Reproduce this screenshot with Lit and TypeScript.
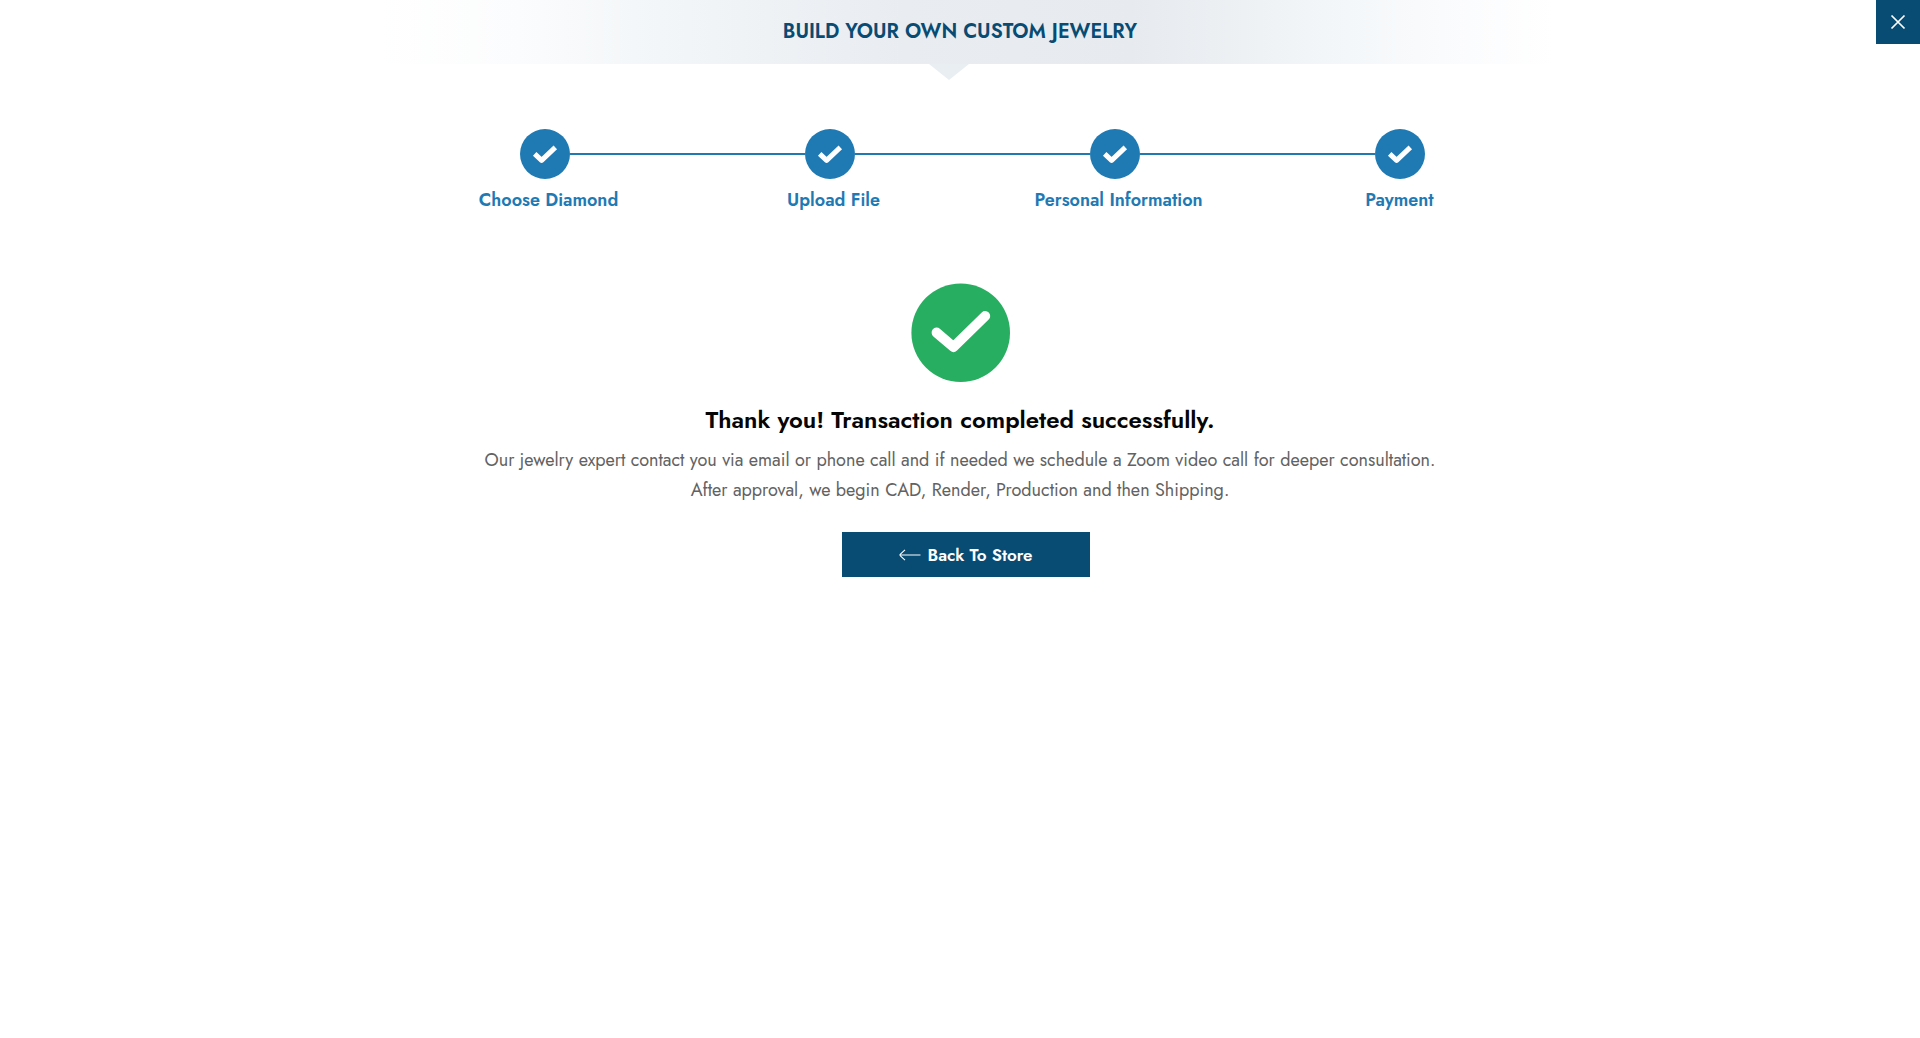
import { LitElement, html, css } from "lit";
import { customElement, property } from "lit/decorators.js";

const STEPS = ["Choose Diamond", "Upload File", "Personal Information", "Payment"];

@customElement("progress-steps")
export class ProgressSteps extends LitElement {
  @property({ type: Array }) steps: string[] = [];

  static styles = css`
    :host { display: block; }
    .steps {
      display: grid;
      grid-auto-flow: column;
      grid-auto-columns: 1fr;
      margin: 0;
      padding: 0;
      list-style: none;
    }
    .step {
      display: flex;
      flex-direction: column;
      align-items: center;
      gap: 6px;
    }
    .marker {
      display: flex;
      align-items: center;
      align-self: stretch;
    }
    .line { flex: 1; height: 2px; background: #1f7ab4; }
    .step:first-child .line:first-child,
    .step:last-child .line:last-child { visibility: hidden; }
    .dot { display: block; width: 50px; height: 50px; }
    .label {
      padding-left: 8px;
      color: #1f7ab4;
      font-size: 18px;
      font-weight: 600;
      line-height: 30px;
      white-space: nowrap;
    }
    .step:last-child .label { padding-left: 0; }
  `;

  render() {
    return html`
      <ol class="steps">
        ${this.steps.map(
          (label) => html`
            <li class="step">
              <div class="marker">
                <span class="line"></span>
                <svg class="dot" viewBox="0 0 50 50" aria-hidden="true">
                  <circle cx="25" cy="25" r="25" fill="#1f7ab4" />
                  <path
                    d="M14.7 24.9 21.6 31.4 35.3 18.4"
                    fill="none"
                    stroke="#fff"
                    stroke-width="5"
                    stroke-linejoin="round"
                  />
                </svg>
                <span class="line"></span>
              </div>
              <span class="label">${label}</span>
            </li>
          `
        )}
      </ol>
    `;
  }
}

@customElement("app-root")
export class AppRoot extends LitElement {
  static styles = css`
    :host {
      display: block;
      min-height: 100vh;
      background: #fff;
      font-family: Jost, Lato, sans-serif;
    }
    .header {
      position: relative;
      display: flex;
      justify-content: center;
      align-items: center;
      height: 64px;
      background: linear-gradient(
        90deg,
        #fff 20%,
        #fbfcfd 27%,
        #f4f7f9 33%,
        #eef2f5 40%,
        #e9edf2 47%,
        #e7ebf0 59%,
        #ecf0f3 64%,
        #f2f6f8 69%,
        #fafbfd 75%,
        #fff 81%
      );
    }
    .title {
      margin: 0;
      color: #084b73;
      font-size: 20px;
      font-weight: 600;
      line-height: 32px;
      text-transform: uppercase;
    }
    .notch {
      position: absolute;
      top: 100%;
      left: calc(50% - 31px);
      width: 40px;
      height: 16px;
      background: #e9eef2;
      clip-path: polygon(0 0, 100% 0, 50% 100%);
    }
    .close {
      position: absolute;
      top: 0;
      right: 0;
      display: grid;
      place-items: center;
      width: 44px;
      height: 44px;
      padding: 0;
      border: 0;
      background: #084b73;
      cursor: pointer;
    }
    .close-icon { display: block; width: 16px; height: 16px; }
    .content {
      box-sizing: border-box;
      max-width: 1164px;
      margin: 0 auto;
      padding-top: 65px;
    }
    .progress { padding-left: 24px; }
    .result {
      display: flex;
      flex-direction: column;
      align-items: center;
      margin-top: 68px;
      text-align: center;
    }
    .success { display: block; width: 100px; height: 100px; }
    .heading {
      margin: 19px 0 0;
      color: #050505;
      font-size: 24px;
      font-weight: 600;
      line-height: 36px;
    }
    .message {
      margin: 7px 0 0;
      color: #626262;
      font-size: 18px;
      line-height: 30px;
    }
    .line { display: block; }
    .back {
      display: flex;
      justify-content: center;
      align-items: center;
      gap: 6px;
      min-width: 248px;
      height: 45px;
      margin: 27px 0 0 12px;
      background: #084b73;
      color: #fff;
      font-size: 17px;
      font-weight: 600;
      line-height: 30px;
      text-decoration: none;
    }
    .arrow { display: block; width: 22px; height: 12px; }
  `;

  render() {
    return html`
      <header class="header">
        <h1 class="title">Build your own custom jewelry</h1>
        <span class="notch"></span>
        <button class="close" type="button" aria-label="Close">
          <svg class="close-icon" viewBox="0 0 16 16" aria-hidden="true">
            <path d="M1.5 1.5 14.5 14.5M14.5 1.5 1.5 14.5" stroke="#fff" stroke-width="1.7" />
          </svg>
        </button>
      </header>
      <main class="content">
        <progress-steps class="progress" .steps=${STEPS}></progress-steps>
        <section class="result">
          <svg class="success" viewBox="0 0 100 100" aria-hidden="true">
            <circle cx="50.7" cy="49.7" r="49.3" fill="#28ae60" />
            <path
              d="M26.6 49.6 43.5 64 75.2 33"
              fill="none"
              stroke="#fff"
              stroke-width="10"
              stroke-linecap="round"
              stroke-linejoin="round"
            />
          </svg>
          <h2 class="heading">Thank you! Transaction completed successfully.</h2>
          <p class="message">
            <span class="line">Our jewelry expert contact you via email or phone call and if needed we schedule a Zoom video call for deeper consultation.</span>
            <span class="line">After approval, we begin CAD, Render, Production and then Shipping.</span>
          </p>
          <a class="back" href="#store">
            <svg class="arrow" viewBox="0 0 22 12" aria-hidden="true">
              <path
                d="M21.5 6H1.5M6 .8 1.4 5.2Q.6 6 1.4 6.8L6 11.2"
                fill="none"
                stroke="#fff"
                stroke-width="1.1"
              />
            </svg>
            <span>Back To Store</span>
          </a>
        </section>
      </main>
    `;
  }
}
